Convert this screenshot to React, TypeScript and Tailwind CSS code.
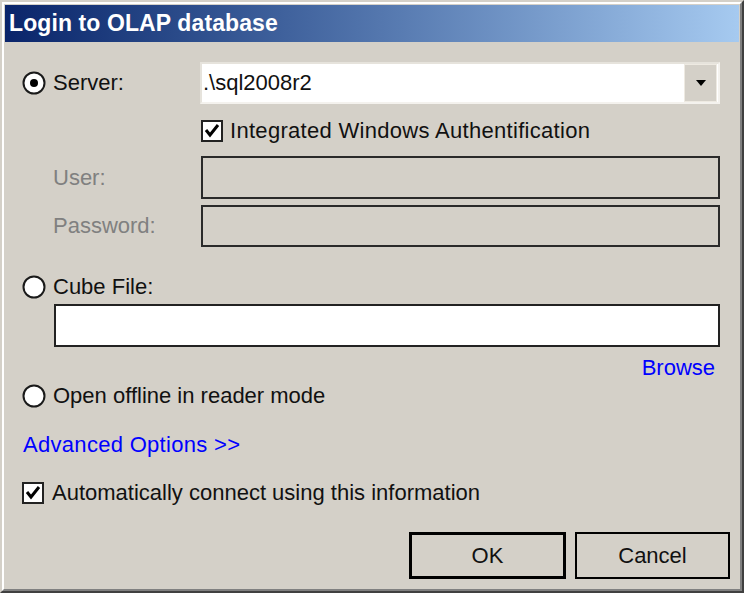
import React from "react";

const FONT = { fontFamily: '"Liberation Sans", Arial, sans-serif' };

function Radio({ checked }: { checked?: boolean }) {
    return (
        <svg width="24" height="24" viewBox="0 0 24 24" className="shrink-0">
            <circle cx="12" cy="12" r="10.5" fill="#ffffff" stroke="#1a1a1a" strokeWidth="2" />
            {checked && <circle cx="12" cy="12" r="4" fill="#000000" />}
        </svg>
    );
}

function Checkbox() {
    return (
        <div className="w-[22px] h-[22px] shrink-0 bg-white border-2 border-[#222222] flex items-center justify-center">
            <svg width="16" height="16" viewBox="0 0 16 16">
                <path d="M2 7 L6 12 L14 2" fill="none" stroke="#000000" strokeWidth="3" />
            </svg>
        </div>
    );
}

export default function App() {
    return (
        <div
            className="w-[744px] h-[593px] bg-[#d4d0c8] border-2 border-t-[#d4d0c8] border-l-[#d4d0c8] border-r-[#404040] border-b-[#404040] text-[22px] text-[#111111]"
            style={FONT}
        >
            <div className="h-full border-2 border-t-white border-l-white border-r-[#808080] border-b-[#808080] p-px flex flex-col">
                {/* Title bar */}
                <div className="h-[37px] shrink-0 flex items-center pl-[4px] bg-gradient-to-r from-[#0a246a] to-[#a6caf0]">
                    <span className="text-white font-bold text-[23px] tracking-[0.1px] leading-none">Login to OLAP database</span>
                </div>

                <div className="flex flex-col pl-[17px] pr-[19px]">
                    {/* Server */}
                    <div className="mt-[20px] h-[42px] flex items-center">
                        <div className="w-[178px] flex items-center gap-[7px]">
                            <Radio checked />
                            <span className="leading-none">Server:</span>
                        </div>
                        <div className="flex-1 h-full bg-white border-2 border-t-[#e6e3dc] border-l-[#e6e3dc] border-r-[#f4f2ee] border-b-[#f4f2ee] flex items-center">
                            <span className="flex-1 pl-[1px] leading-none">.\sql2008r2</span>
                            <div className="w-[33px] h-[38px] mr-[1px] bg-[#d4d0c8] border border-[#eeeae2] flex items-center justify-center">
                                <svg width="12" height="8" viewBox="0 0 12 8">
                                    <path d="M1 1 H11 L6 7 Z" fill="#000000" />
                                </svg>
                            </div>
                        </div>
                    </div>

                    {/* Integrated auth */}
                    <div className="mt-[15px] h-[23px] pl-[179px] flex items-center gap-[7px]">
                        <Checkbox />
                        <span className="leading-none tracking-[0.3px]">Integrated Windows Authentification</span>
                    </div>

                    {/* User */}
                    <div className="mt-[14px] h-[43px] flex items-center">
                        <span className="w-[179px] pl-[31px] leading-none text-[#808080]">User:</span>
                        <div className="flex-1 h-full bg-[#d4d0c8] border-2 border-[#2a2a2a]" />
                    </div>

                    {/* Password */}
                    <div className="mt-[6px] h-[42px] flex items-center">
                        <span className="w-[179px] pl-[31px] leading-none text-[#808080]">Password:</span>
                        <div className="flex-1 h-full bg-[#d4d0c8] border-2 border-[#2a2a2a]" />
                    </div>

                    {/* Cube file */}
                    <div className="mt-[28px] h-[24px] flex items-center gap-[7px]">
                        <Radio />
                        <span className="leading-none">Cube File:</span>
                    </div>
                    <div className="mt-[5px] h-[43px] ml-[32px] bg-white border-2 border-[#222222]" />

                    <div className="mt-[9px] h-[24px] flex items-center justify-end pr-[5px]">
                        <span className="leading-none text-[#0000ff]">Browse</span>
                    </div>

                    {/* Offline */}
                    <div className="mt-[4px] h-[24px] flex items-center gap-[7px]">
                        <Radio />
                        <span className="leading-none">Open offline in reader mode</span>
                    </div>

                    <div className="mt-[25px] h-[24px] flex items-center pl-[1px]">
                        <span className="leading-none tracking-[0.3px] text-[#0000ff]">Advanced Options &gt;&gt;</span>
                    </div>

                    {/* Auto connect */}
                    <div className="mt-[25px] h-[22px] flex items-center gap-[8px]">
                        <Checkbox />
                        <span className="leading-none">Automatically connect using this information</span>
                    </div>

                    {/* Buttons */}
                    <div className="mt-[28px] h-[47px] -mr-[10px] flex justify-end gap-[9px]">
                        <button className="w-[157px] h-full bg-[#d4d0c8] border-[3px] border-black leading-none text-[22px]">
                            OK
                        </button>
                        <button className="w-[155px] h-full bg-[#d4d0c8] border-2 border-black leading-none text-[22px]">
                            Cancel
                        </button>
                    </div>
                </div>
            </div>
        </div>
    );
}
